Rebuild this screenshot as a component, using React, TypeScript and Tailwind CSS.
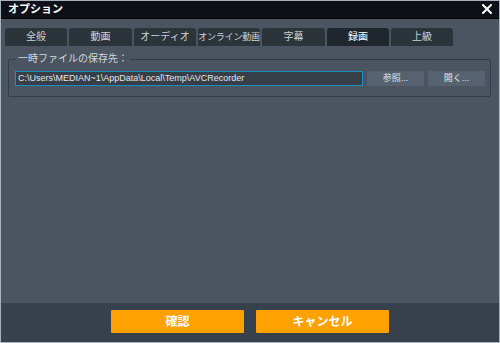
import React from "react";

const tabs = ["全般", "動画", "オーディオ", "オンライン動画", "字幕", "録画", "上級"];
const active = "録画";

export default function App() {
  return (
    <div
      className="w-[500px] h-[343px] flex flex-col border border-[#a9b2bb] bg-[#4a5561] overflow-hidden"
      style={{ fontFamily: '"Liberation Sans", "Noto Sans CJK JP", sans-serif' }}
    >
      {/* Title bar */}
      <div className="h-[18px] shrink-0 flex items-center justify-between bg-[#0d1117] border-b border-black pl-[7px] pr-[7px]">
        <span className="text-[11px] font-bold text-white leading-none">オプション</span>
        <svg width="10" height="10" viewBox="0 0 10 10" className="mt-[-1px]">
          <path d="M1 1 L9 9 M9 1 L1 9" stroke="white" strokeWidth="2" strokeLinecap="square" />
        </svg>
      </div>

      {/* Body */}
      <div className="flex-1 flex flex-col pt-[9px] px-[4px]">
        <div className="flex gap-[2px]">
          {tabs.map((t, i) => (
            <div
              key={t}
              className={
                "h-[18px] rounded-t-[3px] flex items-center justify-center leading-none whitespace-nowrap " +
                (t.length > 5 ? "text-[9px] tracking-[-0.2px] " : "text-[10px] ") +
                (i % 3 === 1 ? "w-[63px] " : "w-[62px] ") +
                (t === active ? "bg-[#1f262d] text-white" : "bg-[#2b333b] text-[#cfd4d9]")
              }
            >
              {t}
            </div>
          ))}
        </div>

        {/* Group box */}
        <div className="relative mt-[13px] ml-[3px] mr-[4px] h-[38px] border border-[#343d46] rounded-[2px] flex items-center gap-[4px] pl-[6px] pt-[1px]">
          <span className="absolute left-[7px] top-[-8px] px-[2px] bg-[#4a5561] text-[10px] text-[#d3d8dc] leading-[14px]">
            一時ファイルの保存先：
          </span>
          <div className="w-[348px] h-[15px] border border-[#1f8fbf] bg-[#363f48] flex items-center pl-[2px] text-[9px] text-[#e4e7ea] leading-none">
            C:\Users\MEDIAN~1\AppData\Local\Temp\AVCRecorder
          </div>
          <div className="w-[57px] h-[15px] bg-[#56626f] flex items-center justify-center text-[9px] text-[#e4e7ea] leading-none">
            参照...
          </div>
          <div className="w-[57px] h-[15px] bg-[#56626f] flex items-center justify-center text-[9px] text-[#e4e7ea] leading-none">
            開く...
          </div>
        </div>
      </div>

      {/* Footer */}
      <div className="h-[39px] shrink-0 bg-[#37414b] flex justify-center gap-[12px] pt-[7px]">
        <button className="w-[133px] h-[23px] bg-[#ffa100] rounded-[1px] text-white text-[12px] font-bold leading-none">
          確認
        </button>
        <button className="w-[133px] h-[23px] bg-[#ffa100] rounded-[1px] text-white text-[12px] font-bold leading-none">
          キャンセル
        </button>
      </div>
    </div>
  );
}
